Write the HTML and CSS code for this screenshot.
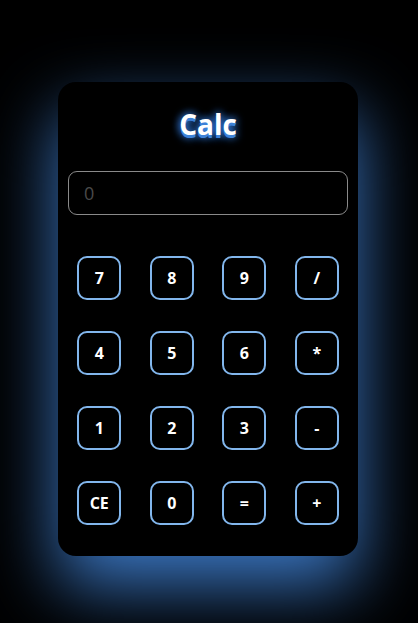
FILE: index.html
```html
<!DOCTYPE html>
<html>
<head>
<meta charset="utf-8">
<link rel="stylesheet" href="styles.css">
</head>
<body>
<div class="calc">
  <h1 class="title">Calc</h1>
  <input class="display" type="text" placeholder="0">
  <div class="keys">
    <button class="key">7</button>
    <button class="key">8</button>
    <button class="key">9</button>
    <button class="key">/</button>
    <button class="key">4</button>
    <button class="key">5</button>
    <button class="key">6</button>
    <button class="key">*</button>
    <button class="key">1</button>
    <button class="key">2</button>
    <button class="key">3</button>
    <button class="key">-</button>
    <button class="key">CE</button>
    <button class="key">0</button>
    <button class="key">=</button>
    <button class="key">+</button>
  </div>
</div>
</body>
</html>
```
FILE: styles.css
```css
html, body {
  margin: 0;
  padding: 0;
  background: #000;
  height: 100%;
  overflow: hidden;
}
body {
  display: flex;
  justify-content: center;
  align-items: flex-start;
  padding-right: 2px;
  box-sizing: border-box;
  font-family: "Open Sans", "DejaVu Sans", sans-serif;
}
.calc {
  margin-top: 82px;
  width: 300px;
  height: 474px;
  box-sizing: border-box;
  padding: 25px 10px 31px;
  background: #000;
  border-radius: 18px;
  box-shadow: 0 30px 70px rgba(62, 125, 205, 0.95);
  display: flex;
  flex-direction: column;
}
.title {
  margin: 0;
  text-align: center;
  color: #fff;
  font-size: 28px;
  line-height: 34px;
  font-weight: 700;
  text-shadow: 0 3px 0 #3d82d8, 0 0 8px #3a8cff, 0 2px 10px #2f7ae0;
}
.display {
  margin-top: 30px;
  height: 44px;
  box-sizing: border-box;
  width: 280px;
  background: #000;
  border: 1px solid #8a8a8a;
  border-radius: 9px;
  padding: 0 15px;
  font-family: "Open Sans", "DejaVu Sans", sans-serif;
  font-size: 18px;
  color: #fff;
  outline: none;
}
.display::placeholder {
  color: #4a4a4a;
}
.keys {
  margin-top: 41px;
  display: grid;
  grid-template-columns: repeat(4, 44px);
  column-gap: 28.5px;
  row-gap: 31px;
  justify-content: center;
}
.key {
  width: 44px;
  height: 44px;
  box-sizing: border-box;
  background: #000;
  border: 2px solid #82b6ec;
  border-radius: 10px;
  color: #fff;
  font-family: "Open Sans", "DejaVu Sans", sans-serif;
  font-size: 16px;
  font-weight: 700;
  padding: 0;
}
```
